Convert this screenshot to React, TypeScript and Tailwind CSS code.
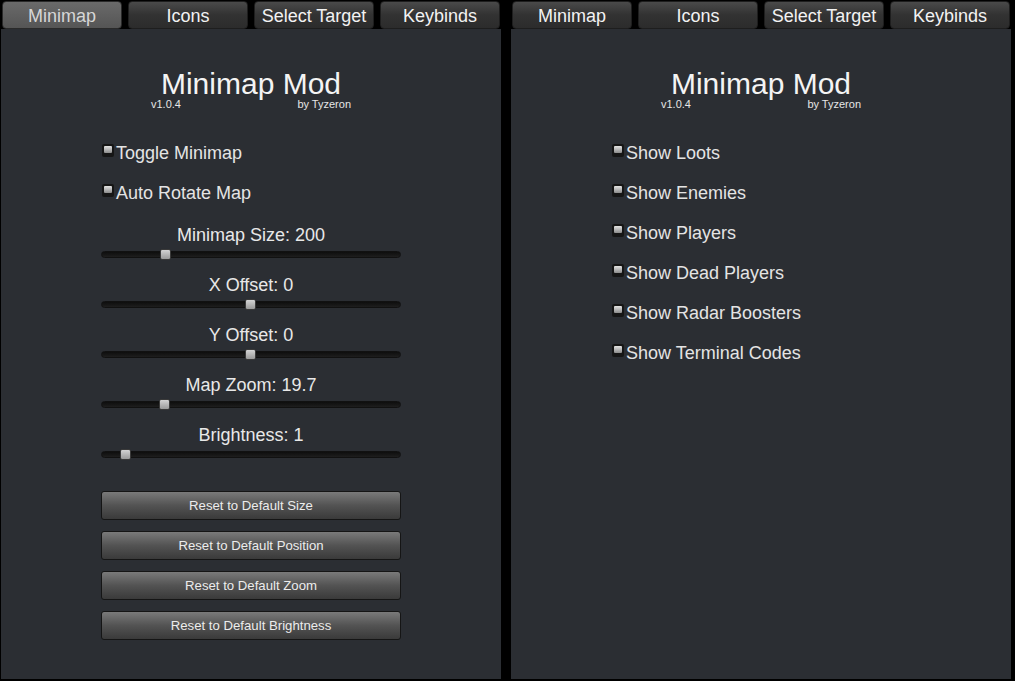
const font = { fontFamily: '"Liberation Sans", Arial, sans-serif' };

const tabs = ["Minimap", "Icons", "Select Target", "Keybinds"];

interface TabBarProps {
    active: number;
}

const TabBar: React.FC<TabBarProps> = ({ active }) => {
    return (
        <div className="flex gap-[6px] px-[1px] pt-[1px] h-[29px]">
            {tabs.map((t, i) => (
                <div
                    key={t}
                    className={
                        i === active
                            ? "w-[120px] h-[28px] pt-[1px] flex items-center justify-center rounded-[4px] border border-[#2a2a2a] bg-gradient-to-b from-[#6a6a6a] to-[#555555] text-[#d6d6d6] text-[18px] leading-none"
                            : "w-[120px] h-[28px] pt-[1px] flex items-center justify-center rounded-[4px] border border-[#1e1e1e] bg-gradient-to-b from-[#4a4a4a] via-[#323232] to-[#2c2c2c] text-[#f2f2f2] text-[18px] leading-none"
                    }
                >
                    {t}
                </div>
            ))}
        </div>
    );
};

const Title: React.FC = () => {
    return (
        <div className="pt-[40px] flex flex-col items-center">
            <div className="text-[30px] leading-[30px] text-[#f4f4f4]">Minimap Mod</div>
            <div className="w-[200px] flex justify-between text-[11px] leading-[11px] text-[#e6e6e6]">
                <span>v1.0.4</span>
                <span>by Tyzeron</span>
            </div>
        </div>
    );
};

const Checkbox: React.FC<{ label: string; first?: boolean }> = ({ label, first }) => {
    return (
        <div className={(first ? "mt-[33px]" : "mt-[20px]") + " flex h-[20px] leading-[20px]"}>
            <div className="ml-[1px] mt-[1px] w-[12px] h-[13px] rounded-[2px] bg-[#161616] p-[2px]">
                <div className="w-[8px] h-[7px] rounded-[1px] bg-gradient-to-b from-[#e4e4e4] to-[#8c8c8c]" />
            </div>
            <span className="ml-[2px] text-[18px] text-[#e4e4e4]">{label}</span>
        </div>
    );
};

const Slider: React.FC<{ label: string; pos: number; first?: boolean }> = ({ label, pos, first }) => {
    return (
        <div className={(first ? "mt-[22px]" : "mt-[17px]") + " flex flex-col"}>
            <div className="h-[20px] leading-[20px] text-center text-[18px] text-[#e8e8e8]">{label}</div>
            <div className="relative mt-[6px] h-[7px] rounded-full bg-gradient-to-b from-[#0e0e0e] to-[#1e1e1e] border border-[#111]">
                <div
                    className="absolute top-[-3px] w-[11px] h-[11px] rounded-[2px] border border-[#3a3a3a] bg-gradient-to-b from-[#d4d4d4] to-[#9a9a9a]"
                    style={{ left: pos }}
                />
            </div>
        </div>
    );
};

const ResetButton: React.FC<{ label: string; first?: boolean }> = ({ label, first }) => {
    return (
        <div
            className={
                (first ? "mt-[33px]" : "mt-[11px]") +
                " h-[29px] flex items-center justify-center rounded-[3px] border border-[#151515] bg-gradient-to-b from-[#7a7a7a] via-[#535353] to-[#3a3a3a] text-[13.2px] text-[#ececec]"
            }
        >
            {label}
        </div>
    );
};

const MinimapPanel: React.FC = () => {
    return (
        <div className="w-[500px] flex flex-col">
            <TabBar active={0} />
            <div className="h-[650px] bg-[#2b2e33] flex flex-col">
                <Title />
                <div className="w-[300px] mx-auto flex flex-col">
                    <Checkbox label="Toggle Minimap" first />
                    <Checkbox label="Auto Rotate Map" />
                    <Slider label="Minimap Size: 200" pos={58} first />
                    <Slider label="X Offset: 0" pos={143} />
                    <Slider label="Y Offset: 0" pos={143} />
                    <Slider label="Map Zoom: 19.7" pos={57} />
                    <Slider label="Brightness: 1" pos={18} />
                    <ResetButton label="Reset to Default Size" first />
                    <ResetButton label="Reset to Default Position" />
                    <ResetButton label="Reset to Default Zoom" />
                    <ResetButton label="Reset to Default Brightness" />
                </div>
            </div>
        </div>
    );
};

const IconsPanel: React.FC = () => {
    const items = ["Show Loots", "Show Enemies", "Show Players", "Show Dead Players", "Show Radar Boosters", "Show Terminal Codes"];
    return (
        <div className="w-[500px] flex flex-col">
            <TabBar active={-1} />
            <div className="h-[650px] bg-[#2b2e33] flex flex-col">
                <Title />
                <div className="w-[300px] mx-auto flex flex-col">
                    {items.map((it, i) => (
                        <Checkbox key={it} label={it} first={i === 0} />
                    ))}
                </div>
            </div>
        </div>
    );
};

export default function App() {
    return (
        <div className="w-[1015px] h-[681px] bg-black flex gap-[10px] pl-[1px] overflow-hidden" style={font}>
            <MinimapPanel />
            <IconsPanel />
        </div>
    );
}
